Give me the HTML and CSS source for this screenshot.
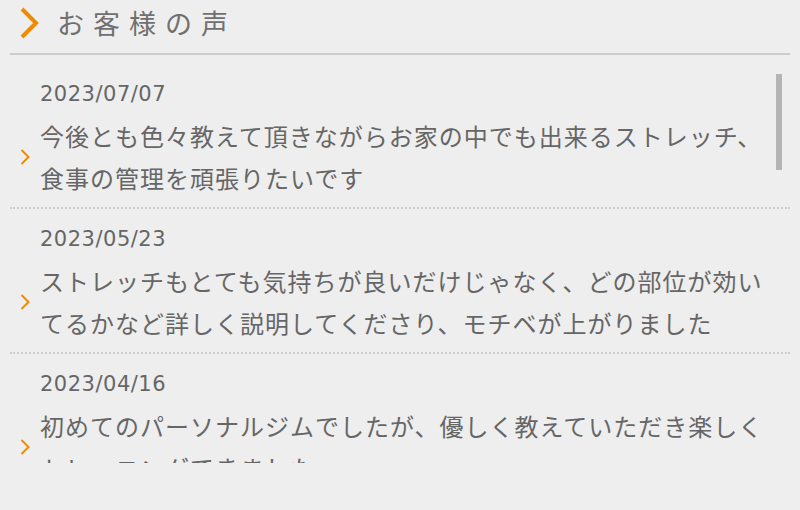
FILE: index.html
```html
<!DOCTYPE html>
<html lang="ja">
<head>
  <meta charset="UTF-8">
  <meta name="viewport" content="width=device-width, initial-scale=1.0">
  <title>お客様の声</title>
  <link rel="stylesheet" href="styles.css">
</head>
<body>
  <div class="voice">
    <h2 class="voice-title">
      <svg class="title-arrow" width="20" height="32" viewBox="0 0 20 32"><polyline points="3,2 17,16 3,30" fill="none" stroke="#f08a00" stroke-width="4"/></svg>
      <span>お客様の声</span>
    </h2>
    <div class="voice-list">
      <div class="voice-scroll">
        <div class="voice-item">
          <div class="voice-date">2023/07/07</div>
          <div class="voice-body">
            <svg class="item-arrow" width="10" height="16" viewBox="0 0 10 16"><polyline points="1.5,1 8.5,8 1.5,15" fill="none" stroke="#f08a00" stroke-width="2"/></svg>
            <p>今後とも色々教えて頂きながらお家の中でも出来るストレッチ、<br>食事の管理を頑張りたいです</p>
          </div>
        </div>
        <div class="voice-item">
          <div class="voice-date">2023/05/23</div>
          <div class="voice-body">
            <svg class="item-arrow" width="10" height="16" viewBox="0 0 10 16"><polyline points="1.5,1 8.5,8 1.5,15" fill="none" stroke="#f08a00" stroke-width="2"/></svg>
            <p>ストレッチもとても気持ちが良いだけじゃなく、どの部位が効いてるかなど詳しく説明してくださり、モチベが上がりました</p>
          </div>
        </div>
        <div class="voice-item">
          <div class="voice-date">2023/04/16</div>
          <div class="voice-body">
            <svg class="item-arrow" width="10" height="16" viewBox="0 0 10 16"><polyline points="1.5,1 8.5,8 1.5,15" fill="none" stroke="#f08a00" stroke-width="2"/></svg>
            <p>初めてのパーソナルジムでしたが、優しく教えていただき楽しく<br>トレーニングできました</p>
          </div>
        </div>
      </div>
      <div class="scroll-thumb"></div>
    </div>
  </div>
</body>
</html>
```

FILE: styles.css
```css
body {
  margin: 0;
  background: #eeeeee;
  color: #666;
  font-family: "Noto Sans CJK JP", sans-serif;
}
.voice {
  padding: 0 10px;
}
.voice-title {
  display: flex;
  align-items: center;
  height: 45px;
  margin: 0;
  padding: 0 0 8px 9px;
  border-bottom: 2px solid #cccccc;
  font-family: "Liberation Serif", "Noto Sans CJK JP", serif;
  font-weight: normal;
  font-size: 27px;
  letter-spacing: 9px;
  color: #707070;
}
.title-arrow {
  margin-right: 18px;
}
.voice-list {
  position: relative;
  height: 408px;
  overflow: hidden;
}
.voice-scroll {
  padding-top: 9px;
}
.voice-item {
  padding: 15px 0 8px 0;
  border-bottom: 2px dotted #cccccc;
}
.voice-date {
  padding-left: 30px;
  font-family: "DejaVu Sans", sans-serif;
  font-size: 21px;
  line-height: 30px;
  letter-spacing: 0.5px;
  margin-bottom: 6px;
}
.voice-body {
  display: flex;
  align-items: center;
}
.item-arrow {
  margin: 0 10px 0 10px;
  flex-shrink: 0;
}
.voice-body p {
  margin: 0;
  width: 735px;
  font-size: 24px;
  line-height: 42px;
  letter-spacing: 1px;
}
.scroll-thumb {
  position: absolute;
  top: 19px;
  right: 8px;
  width: 6px;
  height: 96px;
  background: #b4b4b4;
}
```
